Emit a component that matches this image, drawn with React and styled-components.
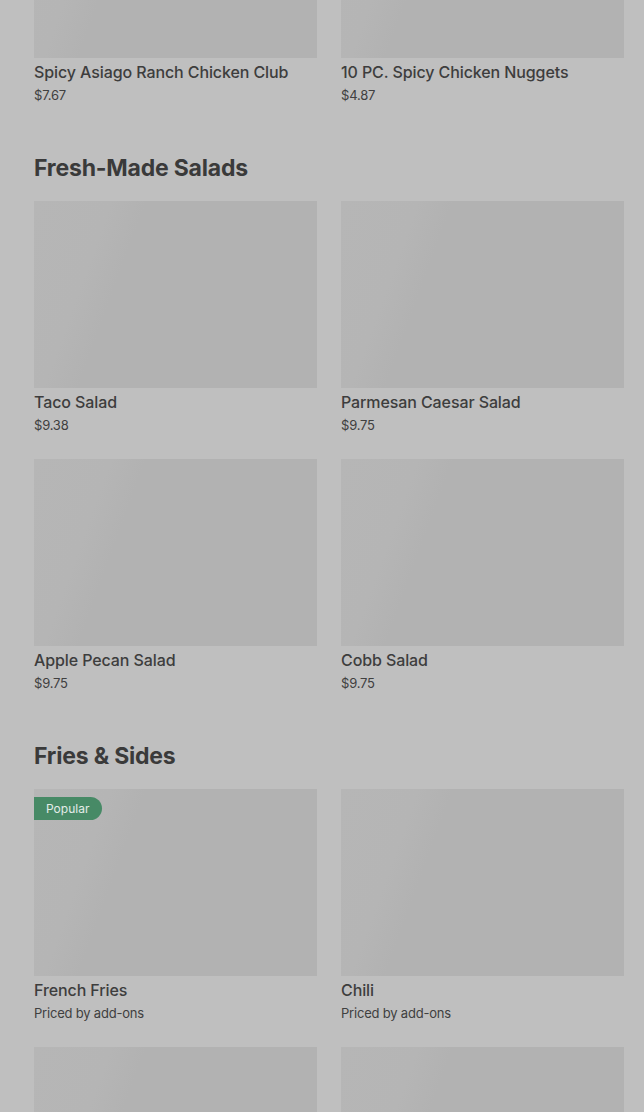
import React from 'react'
import styled, { createGlobalStyle } from 'styled-components'

const sections = [
    {
        title: null,
        items: [
            { name: 'Spicy Asiago Ranch Chicken Club', price: '$7.67' },
            { name: '10 PC. Spicy Chicken Nuggets', price: '$4.87' },
        ],
    },
    {
        title: 'Fresh-Made Salads',
        items: [
            { name: 'Taco Salad', price: '$9.38' },
            { name: 'Parmesan Caesar Salad', price: '$9.75' },
            { name: 'Apple Pecan Salad', price: '$9.75' },
            { name: 'Cobb Salad', price: '$9.75' },
        ],
    },
    {
        title: 'Fries & Sides',
        items: [
            { name: 'French Fries', price: 'Priced by add-ons', popular: true },
            { name: 'Chili', price: 'Priced by add-ons' },
            { name: 'Baked Potato', price: '$2.99' },
            { name: 'Apple Bites', price: '$1.49' },
        ],
    },
]

function App() {
    return (
        <>
            <GlobalStyle />
            <Page>
                {sections.map((section, i) => (
                    <Section key={i}>
                        {section.title && <SectionTitle>{section.title}</SectionTitle>}
                        <Grid>
                            {section.items.map((item) => (
                                <Card key={item.name}>
                                    <Thumb>
                                        {item.popular && <Badge>Popular</Badge>}
                                    </Thumb>
                                    <ItemName>{item.name}</ItemName>
                                    <ItemPrice>{item.price}</ItemPrice>
                                </Card>
                            ))}
                        </Grid>
                    </Section>
                ))}
            </Page>
        </>
    )
}

export default App

const GlobalStyle = createGlobalStyle`
    html, body {
        margin: 0;
        padding: 0;
        height: 100%;
        overflow: hidden;
        background: #bfbfbf;
    }
    body {
        font-family: Inter, "Noto Sans", sans-serif;
        -webkit-font-smoothing: antialiased;
    }
`

// page is scrolled a bit: the first row of cards is partly above the fold
const Page = styled.main`
    display: flex;
    flex-direction: column;
    gap: 50px;
    padding: 0 20px 0 34px;
    margin-top: -129px;
    background: #bfbfbf;
    color: #3b3b3b;
`

const Section = styled.section`
    display: flex;
    flex-direction: column;
`

const SectionTitle = styled.h2`
    margin: 0 0 19px;
    font-size: 23px;
    line-height: 28px;
    font-weight: 700;
    letter-spacing: -0.2px;
    color: #3a3a3a;
`

const Grid = styled.div`
    display: grid;
    grid-template-columns: repeat(2, 1fr);
    column-gap: 24px;
    row-gap: 25px;
`

const Card = styled.div`
    display: flex;
    flex-direction: column;
`

const Thumb = styled.div`
    position: relative;
    height: 187px;
    background: linear-gradient(
        110deg,
        #b6b6b6 0%,
        #b5b5b5 22%,
        #b2b2b2 32%,
        #b2b2b2 100%
    );
`

const Badge = styled.span`
    position: absolute;
    top: 8px;
    left: 0;
    height: 23px;
    padding: 0 13px 0 12px;
    display: flex;
    align-items: center;
    background: #478a66;
    color: #e4ece8;
    font-size: 12px;
    border-radius: 0 12px 12px 0;
`

const ItemName = styled.div`
    margin-top: 4px;
    font-size: 16px;
    line-height: 20px;
    font-weight: 500;
    letter-spacing: -0.1px;
    color: #3d3d3d;
`

const ItemPrice = styled.div`
    margin-top: 4px;
    font-size: 13px;
    line-height: 18px;
    font-weight: 400;
    letter-spacing: -0.2px;
    color: #404040;
`
